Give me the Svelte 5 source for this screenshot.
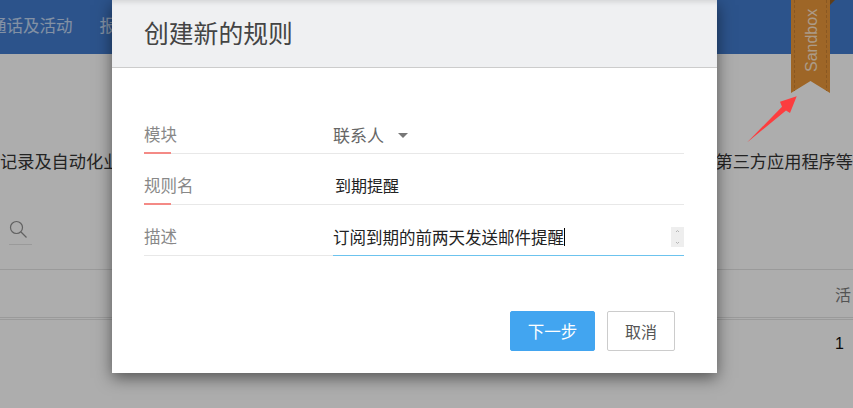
<script>
  let rules = [
    { label: '模块', value: '联系人', kind: 'select', required: true },
    { label: '规则名', value: '到期提醒', kind: 'text', required: true },
    { label: '描述', value: '订阅到期的前两天发送邮件提醒', kind: 'textarea', required: false }
  ];
</script>

<div class="page">
  <nav class="topnav">
    <span class="nav-item">通话及活动</span>
    <span class="nav-item">报表</span>
  </nav>

  <div class="intro">
    <span>记录及自动化业务流程</span>
    <span>第三方应用程序等</span>
  </div>

  <div class="search">
    <svg width="18" height="18" viewBox="0 0 18 18" fill="none" stroke="#8c8c8c" stroke-width="1.2">
      <circle cx="7.500" cy="7.500" r="6" />
      <path d="M12 12l5.500 5.500" />
    </svg>
  </div>

  <div class="table-head"><span>活</span></div>
  <div class="table-row"><span>1</span></div>
</div>

<div class="ribbon-fold"></div>
<div class="ribbon">
  <span class="ribbon-text">Sandbox</span>
</div>

<div class="backdrop">
  <div class="modal">
    <header class="modal-header">
      <h2>创建新的规则</h2>
    </header>

    <div class="modal-body">
      {#each rules as rule}
        <div class="row">
          <div class="label" class:required={rule.required}>{rule.label}</div>
          <div class="field" class:active={rule.kind === 'textarea'}>
            {#if rule.kind === 'select'}
              <span class="select-value">{rule.value}</span>
              <span class="caret-down"></span>
            {:else if rule.kind === 'textarea'}
              <span class="value">{rule.value}</span><span class="cursor"></span>
              <span class="spinner">
                <svg width="13" height="20" viewBox="0 0 13 20" fill="none" stroke="#b5b5b5" stroke-width="1">
                  <path d="M5 5l1.500-1.500L8 5M5 15l1.500 1.500L8 15" />
                </svg>
              </span>
            {:else}
              <span class="value plain">{rule.value}</span>
            {/if}
          </div>
        </div>
      {/each}
    </div>

    <footer class="modal-footer">
      <button class="btn primary">下一步</button>
      <button class="btn">取消</button>
    </footer>
  </div>
</div>

<svg class="arrow" width="60" height="56" viewBox="0 0 60 56">
  <polygon points="2,49.500 37,13.700 35,8.700 51.700,3.300 45,20 41,17.500" fill="#fc3d3f" />
</svg>

<style>
  :global(body) {
    margin: 0;
    overflow: hidden;
    font-family: "Noto Sans CJK SC", "Liberation Sans", sans-serif;
  }

  .page {
    width: 853px;
    height: 408px;
    background: #f8f8f8;
    overflow: hidden;
    color: #333;
  }

  .topnav {
    height: 54px;
    background: #3f78c8;
    display: flex;
    align-items: center;
    gap: 27px;
    margin-left: -10px;
    padding-bottom: 4px;
    box-sizing: border-box;
    font-size: 16.500px;
    color: #fff;
    white-space: nowrap;
  }

  .nav-item {
    opacity: 0.65;
  }

  .intro {
    display: flex;
    justify-content: space-between;
    margin-top: 94px;
    height: 26px;
    line-height: 26px;
    font-size: 17.200px;
    white-space: nowrap;
  }

  .search {
    width: 23px;
    height: 31px;
    margin: 40px 0 0 9px;
    padding-top: 5px;
    box-sizing: border-box;
    border-bottom: 1px solid #ddd;
  }

  .table-head {
    margin-top: 24px;
    height: 49px;
    border-top: 1px solid #ddd;
    border-bottom: 1px solid #ddd;
    display: flex;
    align-items: center;
    justify-content: flex-end;
    box-sizing: border-box;
    font-size: 16px;
    color: #777;
  }

  .table-head span {
    width: 18px;
  }

  .table-row {
    margin-top: 1px;
    border-top: 1px solid #ddd;
    height: 48px;
    display: flex;
    align-items: center;
    justify-content: flex-end;
    box-sizing: border-box;
    font-family: "Liberation Sans", sans-serif;
    font-size: 16px;
    color: #111;
  }

  .table-row span {
    width: 18px;
  }

  .ribbon {
    position: absolute;
    top: 0;
    left: 791px;
    width: 39px;
    height: 93px;
    background: #e29238;
    clip-path: polygon(0 0, 100% 0, 100% 100%, 50% 81px, 0 100%);
    display: flex;
    justify-content: center;
  }

  .ribbon::before {
    content: "";
    position: absolute;
    left: 3px;
    right: 3px;
    top: 0;
    bottom: 0;
    border-left: 1px dashed #c67f30;
    border-right: 1px dashed #c67f30;
  }

  .ribbon-fold {
    position: absolute;
    top: 0;
    left: 830px;
    width: 0;
    height: 0;
    border-top: 5px solid #8a5a24;
    border-right: 5px solid transparent;
  }

  .ribbon-text {
    writing-mode: vertical-rl;
    transform: rotate(180deg);
    font-family: "Liberation Sans", sans-serif;
    font-size: 16px;
    color: #fff;
    opacity: 0.7;
    height: 62px;
    margin: 10px 0 0 1px;
    line-height: 39px;
  }

  .backdrop {
    position: absolute;
    inset: 0;
    width: 853px;
    height: 408px;
    background: rgba(0, 0, 0, 0.3);
  }

  .modal {
    width: 605px;
    height: 373px;
    margin-left: 112px;
    background: #fff;
    box-shadow: 0 5px 15px rgba(0, 0, 0, 0.5);
    display: flex;
    flex-direction: column;
  }

  .modal-header {
    height: 68px;
    box-sizing: border-box;
    padding: 0 32px 4px;
    background: #eff0f2;
    border-bottom: 1px solid #ccc;
    box-shadow: inset 0 5px 5px -3px rgba(0, 0, 0, 0.12);
    display: flex;
    align-items: center;
  }

  .modal-header h2 {
    margin: 0;
    font-size: 24.800px;
    font-weight: 400;
    color: #444;
  }

  .modal-body {
    padding: 35px 33px 0 32px;
    display: flex;
    flex-direction: column;
    flex: 1;
  }

  .row {
    display: flex;
    height: 51px;
    border-bottom: 1px solid #e8e8e8;
    box-sizing: border-box;
    align-items: stretch;
    font-size: 16.500px;
  }

  .label {
    width: 189px;
    flex-shrink: 0;
    color: #888;
    padding-top: 19px;
    line-height: 24px;
    position: relative;
    box-sizing: border-box;
  }

  .label.required::after {
    content: "";
    position: absolute;
    left: 0;
    bottom: -1px;
    width: 27px;
    height: 2px;
    background: #f48a86;
  }

  .field {
    flex: 1;
    display: flex;
    align-items: flex-start;
    padding-top: 20px;
    line-height: 24px;
    position: relative;
    box-sizing: border-box;
    color: #222;
  }

  .row:nth-child(2) .field {
    padding-top: 19px;
  }

  .field.active {
    margin-bottom: -1px;
    border-bottom: 1px solid #6cc3ee;
  }

  .plain {
    margin-left: 2px;
    font-size: 16px;
  }

  .select-value {
    color: #666;
    font-size: 17px;
  }

  .caret-down {
    width: 0;
    height: 0;
    margin: 10px 0 0 14px;
    border-left: 5px solid transparent;
    border-right: 5px solid transparent;
    border-top: 5px solid #777;
  }

  .cursor {
    width: 1px;
    height: 18px;
    margin-top: 3px;
    background: #000;
  }

  .spinner {
    position: absolute;
    right: 0;
    top: 22px;
    width: 13px;
    height: 20px;
    background: #eee;
  }

  .spinner svg {
    display: block;
  }

  .modal-footer {
    display: flex;
    justify-content: flex-end;
    gap: 12px;
    padding: 0 42px 22px 0;
  }

  .btn {
    height: 40px;
    width: 68px;
    box-sizing: border-box;
    border: 1px solid #ccc;
    border-radius: 2px;
    background: #fff;
    color: #555;
    font-family: inherit;
    font-size: 16px;
    padding: 0;
  }

  .btn.primary {
    width: 85px;
    background: #42a5f0;
    border-color: #42a5f0;
    color: #fff;
    font-size: 16.500px;
  }

  .arrow {
    position: absolute;
    left: 745px;
    top: 93px;
  }
</style>
